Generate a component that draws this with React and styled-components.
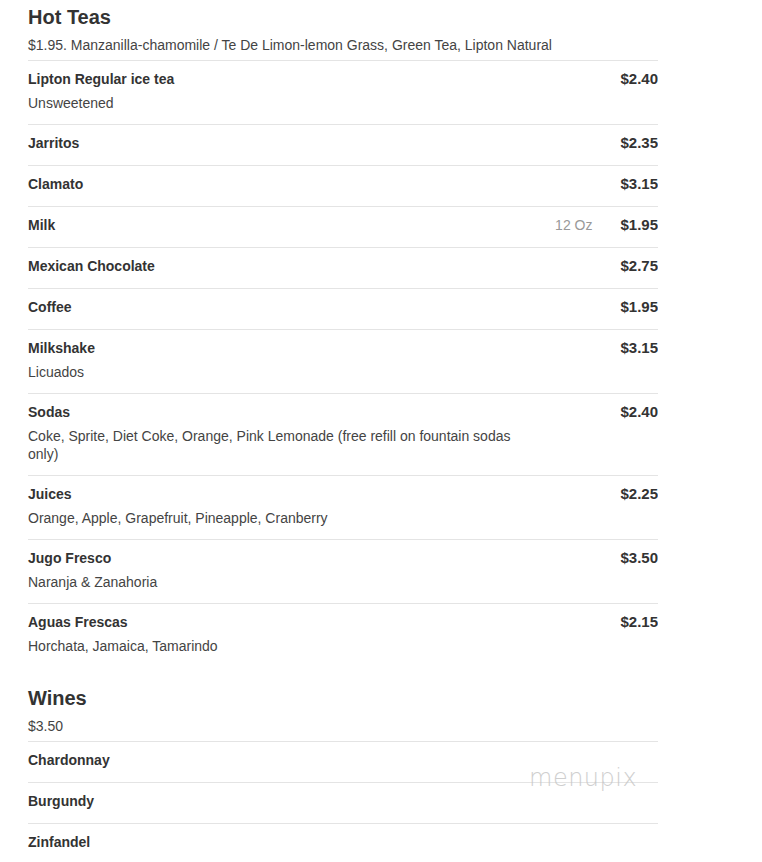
import React from "react";
import styled, { createGlobalStyle } from "styled-components";

const sections = [
  {
    title: "Hot Teas",
    note: "$1.95. Manzanilla-chamomile / Te De Limon-lemon Grass, Green Tea, Lipton Natural",
    items: [
      { name: "Lipton Regular ice tea", desc: "Unsweetened", price: "$2.40" },
      { name: "Jarritos", price: "$2.35" },
      { name: "Clamato", price: "$3.15" },
      { name: "Milk", size: "12 Oz", price: "$1.95" },
      { name: "Mexican Chocolate", price: "$2.75" },
      { name: "Coffee", price: "$1.95" },
      { name: "Milkshake", desc: "Licuados", price: "$3.15" },
      {
        name: "Sodas",
        desc: "Coke, Sprite, Diet Coke, Orange, Pink Lemonade (free refill on fountain sodas only)",
        price: "$2.40",
      },
      { name: "Juices", desc: "Orange, Apple, Grapefruit, Pineapple, Cranberry", price: "$2.25" },
      { name: "Jugo Fresco", desc: "Naranja & Zanahoria", price: "$3.50" },
      { name: "Aguas Frescas", desc: "Horchata, Jamaica, Tamarindo", price: "$2.15" },
    ],
  },
  {
    title: "Wines",
    note: "$3.50",
    items: [{ name: "Chardonnay" }, { name: "Burgundy" }, { name: "Zinfandel" }],
  },
];

const App = () => {
  return (
    <>
      <GlobalStyle />
      <Page>
        {sections.map((section) => (
          <Section key={section.title}>
            <Title>{section.title}</Title>
            <Note>{section.note}</Note>
            {section.items.map((item) => (
              <Row key={item.name}>
                <Info>
                  <Name>{item.name}</Name>
                  {item.desc && <Desc>{item.desc}</Desc>}
                </Info>
                {item.size && <Size>{item.size}</Size>}
                {item.price && <Price>{item.price}</Price>}
              </Row>
            ))}
          </Section>
        ))}
        <Watermark>menupix</Watermark>
      </Page>
    </>
  );
};

export default App;

const GlobalStyle = createGlobalStyle`
  body {
    margin: 0;
    background: #fff;
    font-family: "Liberation Sans", Arial, sans-serif;
    color: #333;
  }
`;

const Page = styled.div`
  position: relative;
  width: 630px;
  padding-left: 28px;
  padding-top: 5px;
  height: 857px;
  overflow: hidden;
`;

const Section = styled.section`
  & + & {
    margin-top: 19px;
  }
`;

const Title = styled.h2`
  margin: 0;
  font-size: 20px;
  line-height: 24px;
  font-weight: bold;
  color: #333;
`;

const Note = styled.div`
  margin-top: 6px;
  margin-bottom: 5px;
  font-size: 14px;
  line-height: 20px;
  color: #444;
`;

const Row = styled.div`
  display: flex;
  align-items: flex-start;
  border-top: 1px solid #e4e4e4;
  padding: 8px 0 12px;
`;

const Info = styled.div`
  width: 500px;
  flex: 0 0 auto;
`;

const Name = styled.div`
  font-size: 14px;
  line-height: 20px;
  font-weight: bold;
  color: #333;
`;

const Desc = styled.div`
  margin-top: 5px;
  font-size: 14px;
  line-height: 18px;
  color: #444;
`;

const Size = styled.div`
  margin-left: auto;
  font-size: 14px;
  line-height: 20px;
  color: #999;
`;

const Price = styled.div`
  margin-left: auto;
  padding-left: 28px;
  font-size: 15px;
  line-height: 20px;
  font-weight: bold;
  color: #333;

  ${Size} + & {
    margin-left: 0;
  }
`;

const Watermark = styled.div`
  position: absolute;
  left: 529px;
  top: 764px;
  font-family: "DejaVu Sans", sans-serif;
  font-weight: 200;
  font-size: 24px;
  letter-spacing: 0.5px;
  color: #c4c4c4;
  opacity: 0.8;
`;
